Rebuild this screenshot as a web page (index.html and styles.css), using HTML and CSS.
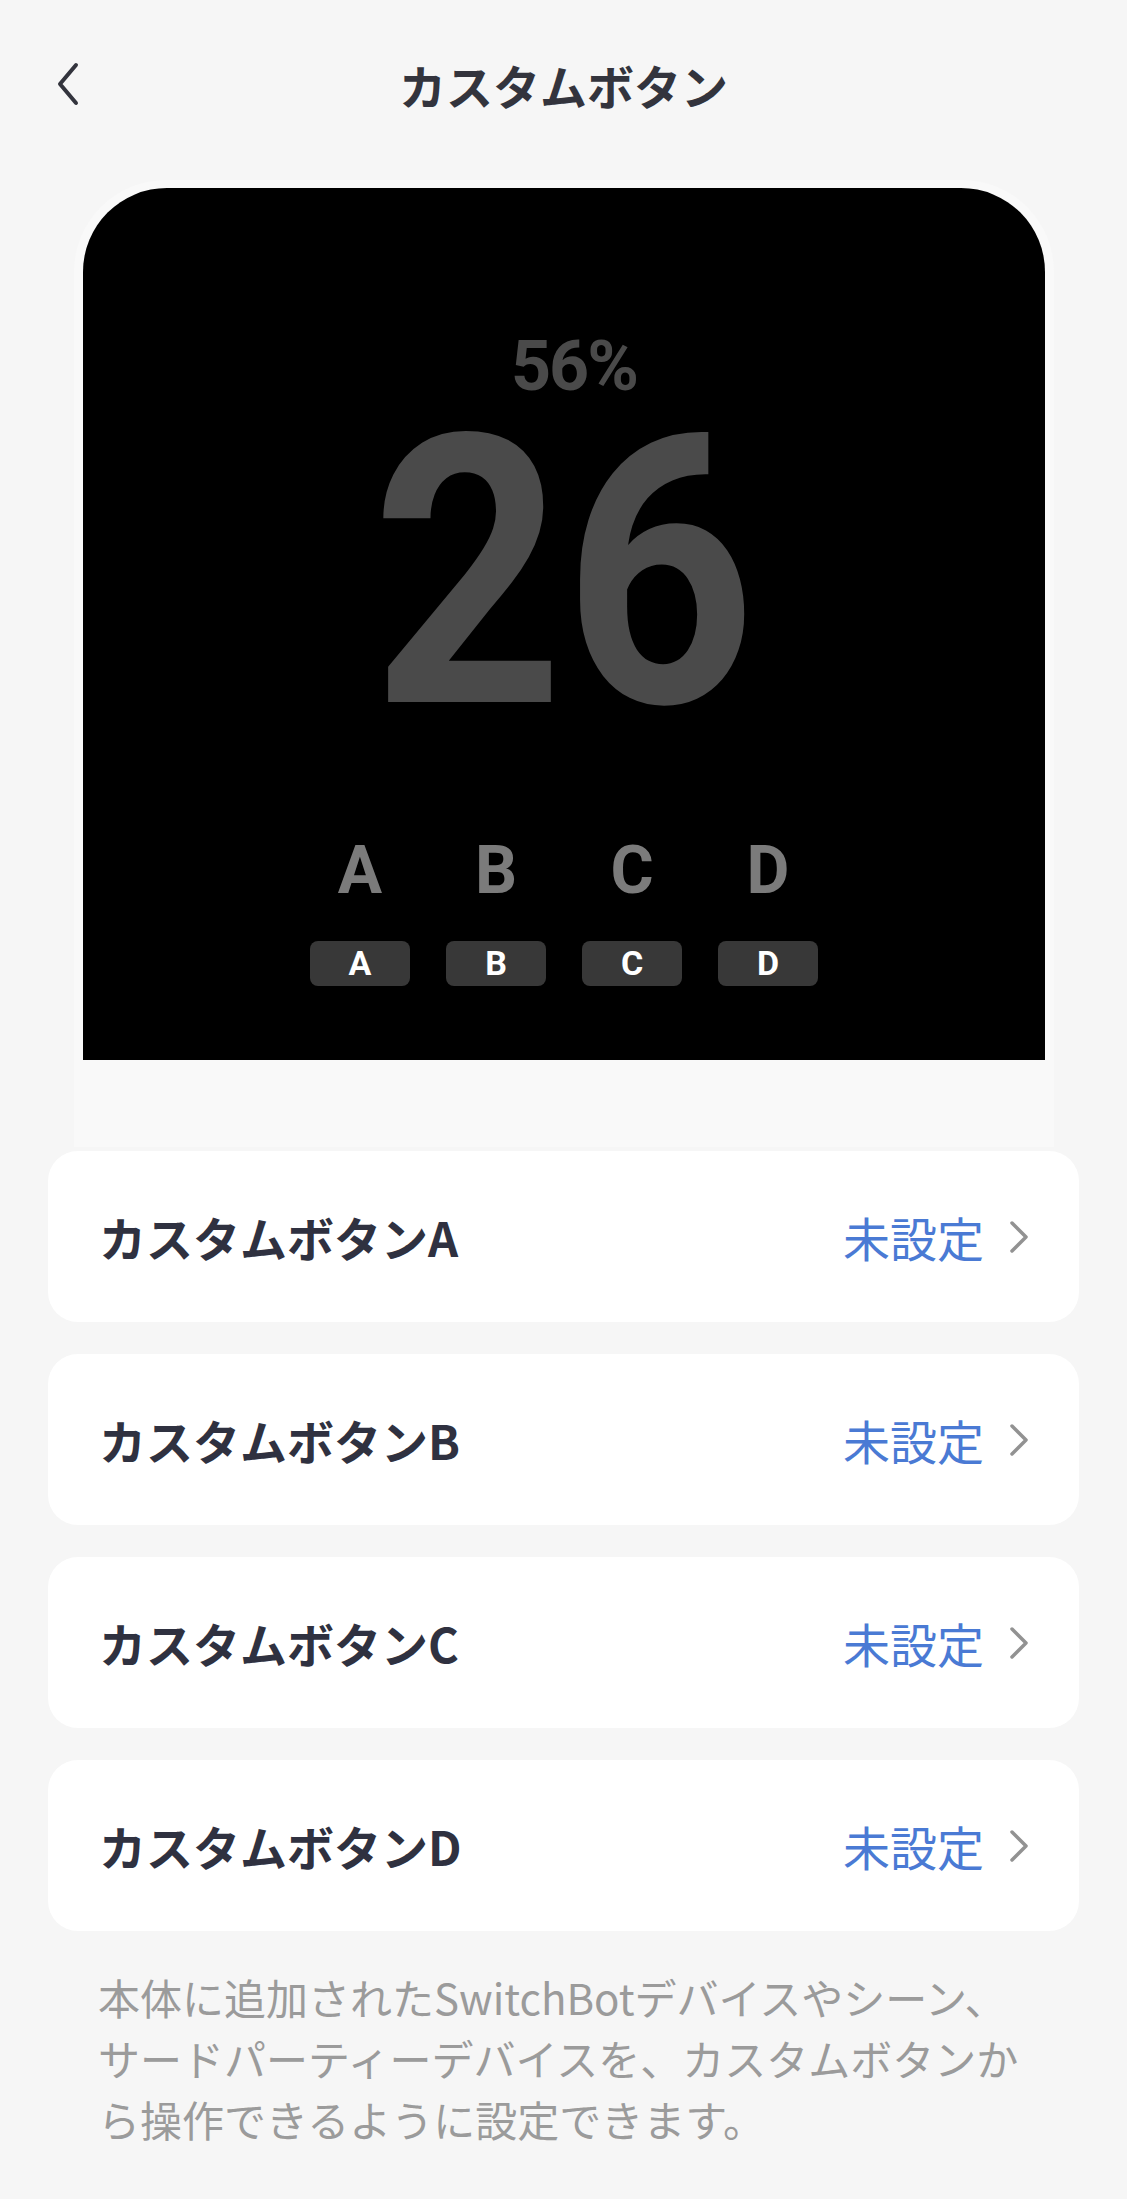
FILE: index.html
```html
<!DOCTYPE html>
<html lang="ja">
<head>
    <meta charset="UTF-8">
    <meta name="viewport" content="width=device-width, initial-scale=1.0">
    <title>カスタムボタン</title>
    <link rel="stylesheet" href="styles.css">
</head>
<body>
    <header class="top-bar">
        <div class="back">
            <svg width="26" height="44" viewBox="0 0 26 44">
                <path d="M21 3 L5 22 L21 41" fill="none" stroke="#33343d" stroke-width="4" stroke-linecap="round" stroke-linejoin="round"/>
            </svg>
        </div>
        <h1>カスタムボタン</h1>
        <div></div>
    </header>

    <div class="device">
        <div class="screen">
            <div class="humidity">56%</div>
            <div class="temp">26</div>
            <div class="letters">
                <span>A</span><span>B</span><span>C</span><span>D</span>
            </div>
            <div class="pills">
                <span>A</span><span>B</span><span>C</span><span>D</span>
            </div>
        </div>
    </div>

    <div class="list">
        <div class="row">
            <span class="label">カスタムボタンA</span>
            <span class="value">未設定
                <svg width="22" height="34" viewBox="0 0 22 34"><path d="M4 3 L18 17 L4 31" fill="none" stroke="#929292" stroke-width="3.5" stroke-linecap="round" stroke-linejoin="round"/></svg>
            </span>
        </div>
        <div class="row">
            <span class="label">カスタムボタンB</span>
            <span class="value">未設定
                <svg width="22" height="34" viewBox="0 0 22 34"><path d="M4 3 L18 17 L4 31" fill="none" stroke="#929292" stroke-width="3.5" stroke-linecap="round" stroke-linejoin="round"/></svg>
            </span>
        </div>
        <div class="row">
            <span class="label">カスタムボタンC</span>
            <span class="value">未設定
                <svg width="22" height="34" viewBox="0 0 22 34"><path d="M4 3 L18 17 L4 31" fill="none" stroke="#929292" stroke-width="3.5" stroke-linecap="round" stroke-linejoin="round"/></svg>
            </span>
        </div>
        <div class="row">
            <span class="label">カスタムボタンD</span>
            <span class="value">未設定
                <svg width="22" height="34" viewBox="0 0 22 34"><path d="M4 3 L18 17 L4 31" fill="none" stroke="#929292" stroke-width="3.5" stroke-linecap="round" stroke-linejoin="round"/></svg>
            </span>
        </div>
    </div>

    <p class="note">本体に追加されたSwitchBotデバイスやシーン、サードパーティーデバイスを、カスタムボタンから操作できるように設定できます。</p>
</body>
</html>
```

FILE: styles.css
```css
body {
    margin: 0;
    background-color: #f6f6f6;
    font-family: "Noto Sans CJK JP", sans-serif;
    color: #2f3140;
}
.top-bar {
    display: grid;
    grid-template-columns: 1fr auto 1fr;
    align-items: center;
    height: 168px;
    margin-bottom: 12px;
}
.back {
    padding-left: 55px;
    display: flex;
}
.top-bar h1 {
    margin: 0;
    font-size: 47px;
    font-weight: 600;
    color: #33343d;
}
.device {
    margin: 0 73px 0 74px;
    padding: 8px 9px 87px;
    background-color: #f9f9f9;
    border-radius: 92px 92px 0 0;
}
.screen {
    height: 872px;
    box-sizing: border-box;
    padding-top: 143px;
    background: #000;
    border-radius: 84px 84px 0 0;
    display: flex;
    flex-direction: column;
    align-items: center;
}
.humidity {
    margin-left: 20px;
    font-family: Roboto, sans-serif;
    font-weight: 700;
    font-size: 70px;
    line-height: 70px;
    letter-spacing: -2px;
    color: #4a4a4a;
}
.temp {
    margin-top: 23px;
    font-family: Roboto, sans-serif;
    font-weight: 700;
    font-size: 376px;
    line-height: 300px;
    color: #4a4a4a;
    transform: scaleX(0.89);
}
.letters, .pills {
    display: grid;
    grid-template-columns: repeat(4, 100px);
    column-gap: 36px;
    font-family: Roboto, sans-serif;
    text-align: center;
}
.letters {
    margin-top: 114px;
    font-size: 66px;
    line-height: 66px;
    font-weight: 700;
    color: #7b7b7b;
}
.pills {
    margin-top: 37px;
}
.pills span {
    height: 45px;
    line-height: 45px;
    border-radius: 8px;
    background-color: #383838;
    color: #fff;
    font-size: 34px;
    font-weight: 700;
}
.list {
    margin: 4px 48px 0;
    display: flex;
    flex-direction: column;
    gap: 32px;
}
.row {
    height: 171px;
    background: #fff;
    border-radius: 30px;
    padding: 0 49px 0 51px;
    display: flex;
    align-items: center;
    justify-content: space-between;
}
.label {
    font-size: 47px;
    font-weight: 700;
}
.value {
    display: flex;
    align-items: center;
    gap: 24px;
    font-size: 47px;
    color: #4a7ad4;
}
.note {
    margin: 35px 98px 0;
    font-size: 42px;
    line-height: 61px;
    color: #9b9b9b;
}
```
